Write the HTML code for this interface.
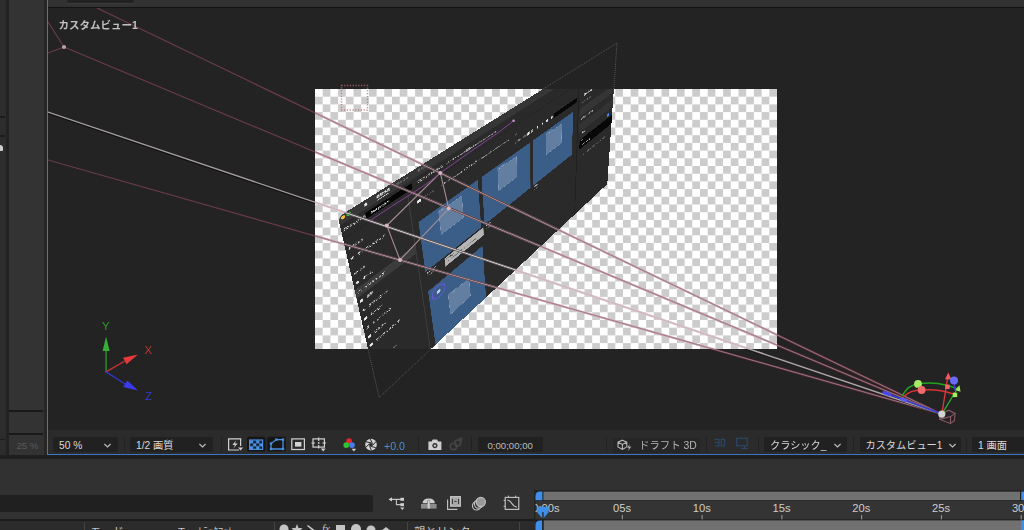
<!DOCTYPE html>
<html lang="ja">
<head>
<meta charset="utf-8">
<title>カスタムビュー1</title>
<style>
*{box-sizing:border-box;margin:0;padding:0}
html,body{width:1024px;height:530px;overflow:hidden;background:#232323}
body{position:relative;font-family:"Liberation Sans","Noto Sans CJK JP",sans-serif;color:#d0d0d0;font-size:11px}
.abs{position:absolute}
#topbar{left:48px;top:0;width:976px;height:7px;background:#323232}
#topline{left:48px;top:7px;width:976px;height:1px;background:#131313}
#tab{left:67px;top:0;width:67px;height:2.5px;background:#222;border-radius:0 0 2px 2px;box-shadow:0 1px 0 #3a3a3a}
#leftcol{left:0;top:0;width:47px;height:456px;background:#333}
#leftcol .a{left:0;top:0;width:6px;height:456px;background:#2d2d2d}
#leftcol .b{left:5.5px;top:0;width:3px;height:456px;background:#222}
#leftcol .c{display:none}
#leftcol .d{left:43.5px;top:0;width:3.5px;height:456px;background:#272625}
#leftcol .e{display:none}
#blueL{left:46.8px;top:0;width:1.3px;height:455px;background:#3f78c8}
#blueB{left:47px;top:453.8px;width:977px;height:1.5px;background:#3d77c4}
#viewlabel{left:58.5px;top:17px;font-size:10.5px;font-weight:bold;color:#c2c2c2;letter-spacing:0;white-space:nowrap}
#toolbar{left:48px;top:430px;width:976px;height:24px;background:#2b2b2b}
.dd{position:absolute;top:437px;height:15.4px;background:#212121;border-radius:2px;color:#dadada;font-size:10.2px;line-height:17.4px;white-space:nowrap;padding-left:6px}
.dd svg{position:absolute;top:6px}
#lower{left:0;top:455px;width:1024px;height:75px;background:#313131}
#lowerline{left:0;top:455px;width:1024px;height:3.6px;background:#1f1f1f}
#search{left:0;top:494.5px;width:373px;height:17px;background:#202020;border-radius:0 2px 2px 0}
#hdrline{left:0;top:519px;width:536px;height:2px;background:#1b1b1b}
#hdr{left:0;top:520px;width:536px;height:10px;background:#2b2b2b;overflow:hidden}
#hdr span{position:absolute;top:1px;font-size:10.5px;color:#b8b8b8;white-space:nowrap;line-height:12px}
#hdr i{position:absolute;top:0;width:1px;height:10px;background:#1a1a1a}
#tl{left:536px;top:490px;width:488px;height:40px;background:#2b2b2b}
.tlabel{position:absolute;top:501px;font-size:11px;color:#c8c8c8;line-height:13px}
.tick{position:absolute;top:515px;width:1px;height:4px;background:#9a9a9a}
</style>
</head>
<body>
<!-- viewer frame -->
<div id="topbar" class="abs"></div><div id="topline" class="abs"></div><div id="tab" class="abs"></div>
<div id="leftcol" class="abs"><div class="abs a"></div><div class="abs b"></div><div class="abs c"></div><div class="abs e"></div><div class="abs d"></div>
 <div class="abs" style="left:0;top:116px;width:5px;height:2px;background:#1c1c1c"></div>
 <div class="abs" style="left:0;top:134.5px;width:5px;height:2px;background:#1c1c1c"></div>
 <div class="abs" style="left:0;top:144.5px;width:3px;height:6px;background:#cfcfcf;border-radius:0 3px 1px 0"></div>
 <div class="abs" style="left:8.5px;top:410.3px;width:34px;height:1.5px;background:#191919"></div>
 <div class="abs" style="left:8.5px;top:433px;width:34px;height:1.5px;background:#191919"></div>
 <div class="abs" style="left:0;top:438.5px;width:5px;height:1.5px;background:#1c1c1c"></div>
 <div class="abs" style="left:16.5px;top:439.5px;font-size:9.6px;color:#5a5a5a;white-space:nowrap">25 %</div>
</div>
<div id="blueL" class="abs"></div>
<!-- VIEWPORT -->
<!--VP-START-->
<svg class="abs" style="left:0;top:0" width="1024" height="530" viewBox="0 0 1024 530">
 <defs>
  <pattern id="chk" x="315" y="89" width="15.4" height="15.4" patternUnits="userSpaceOnUse">
   <rect width="15.4" height="15.4" fill="#ffffff"/>
   <rect x="7.7" y="0" width="7.7" height="7.7" fill="#cccccc"/>
   <rect x="0" y="7.7" width="7.7" height="7.7" fill="#cccccc"/>
  </pattern>
 </defs>
 <polygon points="338,217 617,43 607.3,184 379.1,397.5" fill="none" stroke="#565656" stroke-width="1" stroke-dasharray="1 1"/>
 <rect x="315" y="89" width="462" height="260" fill="url(#chk)"/>
 <rect x="341.5" y="85.5" width="26" height="24.5" fill="none" stroke="#b96a70" stroke-width="1.4" stroke-dasharray="1.2 1.6" opacity=".8"/>
</svg>
<div id="compclip" class="abs" style="left:315px;top:89px;width:462px;height:260px;overflow:hidden">
 <div id="panel" style="position:absolute;left:-315px;top:-89px;width:1000px;height:625px;transform-origin:0 0;transform:matrix3d(0.68601987,-0.14563395,0,0.00065967564,0.21779566,0.44821486,0,0.00040104367,0,0,1,0,338,217,0,1);background:#2a2a2a;border-radius:14px 0 0 0;overflow:hidden">
<!--PANEL-START-->
<style>
#panel{color:#ececec;font-size:8.6px;line-height:10px;font-weight:bold}
#panel .p{position:absolute;white-space:nowrap}
#panel .tile{position:absolute;background:#3b5e89;width:189px;height:174px}
#panel .fold{position:absolute;left:58px;top:14px;width:75px;height:78px;background:rgba(255,255,255,.2);border:1px solid rgba(255,255,255,.28);border-radius:3px}
#panel .fold:before{content:"";position:absolute;left:-1px;top:-7px;width:30px;height:7px;background:rgba(255,255,255,.2);border-radius:3px 3px 0 0}
#panel .ic{position:absolute;width:9px;height:8px;background:#e4e4e4;border-radius:1.5px}
#panel .g{color:#8e8e8e}
#panel .w{color:#f2f2f2;font-weight:bold}
</style>
<div class="p" style="left:0;top:0;width:1000px;height:24px;background:#363636"></div>
<div class="p" style="left:-8px;top:4px;width:9px;height:9px;border-radius:50%;background:#ee5f57"></div>
<div class="p" style="left:4.5px;top:4px;width:9px;height:9px;border-radius:50%;background:#f5bd2f"></div>
<div class="p" style="left:16.5px;top:3.5px;width:10px;height:10px;border-radius:50%;background:#2fc640"></div>
<div class="ic" style="left:56px;top:7px;width:9px;height:9px;clip-path:polygon(50% 0,100% 45%,85% 45%,85% 100%,15% 100%,15% 45%,0 45%)"></div>
<div class="p w" style="left:86px;top:6px;font-size:8.5px">新規作成</div>
<div class="p" style="left:86px;top:19px;width:30px;height:1.5px;background:#d0d0d0"></div>
<div class="p g" style="left:136px;top:6px;font-size:8px;color:#777">読み込み</div>
<div class="p g" style="left:192px;top:6px;font-size:8px;color:#777">書き出し</div>
<div class="p" style="left:3px;top:37px;font-size:7.5px;color:#e2e2e2">プロジェクト名</div>
<div class="p" style="left:56px;top:33px;width:118px;height:17px;background:#050505;border-radius:2px"></div>
<div class="p" style="left:66px;top:36.5px;font-size:8.5px;color:#fff;font-style:italic;font-weight:bold">Test project</div>
<div class="p" style="left:188px;top:37px;font-size:7.5px;color:#dadada">プロジェクトの保存先</div>
<div class="p" style="left:273px;top:37px;font-size:7.5px;color:#c4c4c4">/ユーザー/shared/書類/Adobe/Premiere Pro/22.0</div>
<div class="p" style="left:0;top:62px;width:1000px;height:1px;background:#1c1c1c"></div>
<!-- sidebar -->
<div class="p" style="left:158px;top:63px;width:2.5px;height:562px;background:#3b3b3b"></div>
<div class="p w" style="left:6px;top:93px;font-size:7px">お気に入り</div>
<div class="p" style="left:5px;top:122px;font-size:10px;color:#eee;line-height:12px">★</div>
<div class="p" style="left:22px;top:124px">サンプルメディア</div>
<div class="p w" style="left:6px;top:170px;font-size:7px">ローカル</div>
<div class="ic" style="left:5px;top:200px;clip-path:polygon(50% 0,100% 45%,85% 45%,85% 100%,15% 100%,15% 45%,0 45%)"></div>
<div class="p" style="left:22px;top:200px">ホーム</div>
<div class="p" style="left:0;top:221px;width:158px;height:28px;background:#3c3c3c"></div>
<div class="ic" style="left:5px;top:231px;background:none;border:1.5px solid #e4e4e4"></div>
<div class="p" style="left:22px;top:230px;color:#fff">デスクトップ</div>
<div class="ic" style="left:6px;top:261px;width:7px;height:9px"></div>
<div class="p" style="left:22px;top:261px">書類</div>
<div class="ic" style="left:5px;top:293px;clip-path:polygon(35% 0,65% 0,65% 45%,90% 45%,50% 80%,10% 45%,35% 45%,35% 0,0 88%,100% 88%,100% 100%,0 100%,0 88%)"></div>
<div class="p" style="left:22px;top:292px">ダウンロード</div>
<div class="ic" style="left:5px;top:323px"></div>
<div class="p" style="left:22px;top:323px">ムービー</div>
<div class="ic" style="left:6px;top:355px;width:7px;height:9px;clip-path:polygon(30% 0,100% 0,100% 80%,70% 100%,55% 80%,85% 70%,85% 20%,45% 20%,45% 85%,15% 100%,0 85%,30% 72%)"></div>
<div class="p" style="left:22px;top:355px">ミュージック</div>
<div class="ic" style="left:5px;top:388px"></div>
<div class="p" style="left:22px;top:387px">ピクチャ</div>
<div class="ic" style="left:5px;top:419px;border-radius:1px 3px 1px 1px"></div>
<div class="p" style="left:22px;top:418px">サンプルメディア</div>
<div class="p g" style="left:58px;top:492px;font-size:7px">Test</div>
<!-- breadcrumbs -->
<div class="p" style="left:181px;top:93px;width:10px;height:9px;background:#e8e8e8;border-radius:1.5px"></div>
<div class="p g" style="left:200px;top:92px;font-size:7.5px">ローカル</div>
<div class="p" style="left:252px;top:92px;font-size:7.5px;color:#c8c8c8">/ ユーザー / shared / デスクトップ</div>
<div class="p" style="left:376px;top:92px;font-size:7.5px;color:#b8b8b8">/ Premiere Pro / Sample Media</div>
<div class="p" style="left:508px;top:90px;font-size:9px;color:#aaa">☆</div>
<div class="p g" style="left:506px;top:117px;font-size:7px">並べ替え：名前</div>
<div class="ic" style="left:558px;top:116px;width:9px;height:11px"></div>
<div class="ic" style="left:572px;top:116px;width:9px;height:11px;background:#9a9a9a"></div>
<div class="ic" style="left:598px;top:117px;width:5px;height:9px"></div>
<div class="ic" style="left:620px;top:117px;width:6px;height:9px;clip-path:polygon(0 0,100% 0,60% 50%,60% 100%,40% 100%,40% 50%)"></div>
<div class="ic" style="left:640px;top:117px;width:7px;height:9px"></div>
<div class="ic" style="left:662px;top:117px;width:7px;height:9px;border-radius:50%"></div>
<div class="p" style="left:676px;top:113px;width:111px;height:17px;background:#070707;border-radius:2px"></div>
<!-- tiles -->
<div class="tile" style="left:177px;top:158px"><div class="fold"></div></div>
<div class="tile" style="left:379px;top:158px"><div class="fold"></div></div>
<div class="tile" style="left:581px;top:158px"><div class="fold"></div></div>
<div class="tile" style="left:177px;top:405px;height:230px"><div class="fold" style="top:78px"></div>
 <div class="p" style="left:8px;top:9px;width:45px;height:45px;border:3px solid #6557d8;border-radius:50%"></div>
 <div class="p" style="left:24px;top:25px;width:13px;height:13px;background:#c4cde0;border-radius:50%"></div>
</div>
<div class="p w" style="left:181px;top:336px;font-size:7px">Footage</div>
<div class="p g" style="left:181px;top:347px;font-size:6.5px">12 項目</div>
<div class="p w" style="left:383px;top:336px;font-size:7px">Music</div>
<div class="p g" style="left:383px;top:347px;font-size:6.5px">3 項目</div>
<div class="p w" style="left:585px;top:336px;font-size:7px">Stills</div>
<div class="p g" style="left:585px;top:347px;font-size:6.5px">8 項目</div>
<div class="p" style="left:237px;top:338px;width:137px;height:31px;background:#b4b4b4;border:1px solid #8a8a8a"></div>
<div class="p" style="left:243px;top:341px;font-size:6.5px;color:#222;font-weight:bold">Footage</div>
<div class="p" style="left:243px;top:352px;font-size:6px;color:#444;letter-spacing:-.2px">/ユーザー/shared/デスクトップ/Footage</div>
<!-- right panel -->
<div class="p" style="left:794px;top:63px;width:5px;height:562px;background:#202020"></div>
<div class="p w" style="left:826px;top:116px;font-size:9px">読み込み設定</div>
<div class="p g" style="left:815px;top:143px;font-size:7px">メディアをコピー</div>
<div class="p" style="left:804px;top:166px;width:196px;height:32px;background:#353535"></div>
<div class="p" style="left:813px;top:207px;font-size:7.5px;color:#bdbdbd">新規ビンを作成する</div>
<div class="p" style="left:804px;top:228px;width:196px;height:34px;background:#333"></div>
<div class="p" style="left:966px;top:277px;width:16px;height:11px;border-radius:6px;background:#3f86e8"></div>

<div class="p" style="left:810px;top:296px;width:190px;height:40px;background:#080808"></div>
<div class="p w" style="left:822px;top:268px;font-size:7.5px">名前</div>
<div class="p g" style="left:818px;top:298px;font-size:6px">名前</div>
<div class="p" style="left:822px;top:321px;font-size:7.5px;color:#fff;font-weight:bold">シーケンス 01</div>
<div class="p g" style="left:818px;top:368px;font-size:7px;color:#888">シーケンス設定は最初のクリップに合わせます</div>
<!--PANEL-END-->
 </div>
</div>
<svg id="overlay" class="abs" style="left:0;top:0" width="1024" height="530" viewBox="0 0 1024 530">
 <defs>
  <clipPath id="vp"><rect x="48" y="8" width="976" height="424"/></clipPath>
  <clipPath id="cmp"><rect x="315" y="89" width="462" height="260"/></clipPath>
  <clipPath id="outc"><path clip-rule="evenodd" d="M0,0 H1024 V530 H0 Z M315,89 V349 H777 V89 Z"/></clipPath>
  <clipPath id="rgt"><rect x="777" y="300" width="247" height="132"/></clipPath>
  <clipPath id="mid"><rect x="777" y="8" width="247" height="292"/><rect x="48" y="349" width="729" height="83"/></clipPath>
  <clipPath id="pnl"><polygon points="338,217 617,43 607.3,184 379.1,397.5"/></clipPath>
  <g id="rays">
   <line x1="97" y1="8" x2="941.8" y2="414.1"/>
   <line x1="64" y1="47" x2="941.8" y2="414.1"/>
   <line x1="48" y1="160" x2="941.8" y2="414.1"/>
  </g>
  <g id="ray1"><line x1="48" y1="112" x2="941.8" y2="414.1"/></g>
  <g id="wire">
   <polygon points="440.3,172.9 448.8,208.6 400,260 386.8,225.5"/>
  </g>
 </defs>
 <g clip-path="url(#vp)" fill="none" stroke-linecap="round">
  <!-- on dark background -->
  <use href="#rays" stroke="#6a3c49" stroke-width="1.2"/>
  <line x1="64" y1="47" x2="48" y2="22" stroke="#6a3c49" stroke-width="1.1"/>
  <line x1="64" y1="47" x2="48" y2="53" stroke="#6a3c49" stroke-width="1.1"/>
  <line x1="48" y1="113.3" x2="941.8" y2="415.2" stroke="#101010" stroke-width="1.2" clip-path="url(#outc)"/>
  <use href="#ray1" stroke="#a69da0" stroke-width="1.3"/>
  <circle cx="64" cy="47" r="2.1" fill="#b9a0a8" stroke="none"/>
  <g clip-path="url(#rgt)"><use href="#rays" stroke="#5b2a38" stroke-width="2.3"/><use href="#rays" stroke="#94787f" stroke-width="1"/><use href="#ray1" stroke="#3a3436" stroke-width="2.4"/><use href="#ray1" stroke="#b3acae" stroke-width="1.2"/></g>
  <g clip-path="url(#mid)"><use href="#rays" stroke="#5b2a38" stroke-width="2.1"/><use href="#rays" stroke="#94787f" stroke-width="1"/><use href="#ray1" stroke="#3a3436" stroke-width="2.2"/><use href="#ray1" stroke="#b3acae" stroke-width="1.2"/></g>
  <!-- on checkerboard -->
  <g clip-path="url(#cmp)">
   <use href="#rays" stroke="#d9b3bf" stroke-width="2.2"/>
   <use href="#rays" stroke="#a27c8b" stroke-width="1.15"/>
   <use href="#ray1" stroke="#e2c9d0" stroke-width="2.2"/>
   <use href="#ray1" stroke="#c9b4bb" stroke-width="1"/>
   <!-- on layer -->
   <g clip-path="url(#pnl)">
    <use href="#rays" stroke="#2a2a2a" stroke-width="2.3"/>
    <use href="#ray1" stroke="#2a2a2a" stroke-width="2.3"/>
    <use href="#rays" stroke="#b48a97" stroke-width="1.15"/>
    <use href="#ray1" stroke="#d4c8cc" stroke-width="1.2"/>
    <use href="#wire" stroke="#a58e95" stroke-width="1.1"/>
    <path d="M371,220 Q392,206 412,193.4 T440.3,172.9 Q470,151.6 497.7,133 L513.6,120.8" stroke="#8f46a0" stroke-width="1" opacity=".9"/>
    <circle cx="513.6" cy="120.8" r="1.2" fill="#c9a0d4" stroke="none"/>
    <g fill="#d8b4be" stroke="none">
     <circle cx="440.3" cy="172.9" r="2"/><circle cx="448.8" cy="208.6" r="2"/><circle cx="400" cy="260" r="2"/><circle cx="386.8" cy="225.5" r="2"/>
    </g>
   </g>
  </g>
  <!-- world axes -->
  <g stroke-width="1.3">
   <line x1="106.1" y1="371.9" x2="106.1" y2="349" stroke="#2f9a2f"/>
   <polygon points="106.1,336.4 109.6,351 102.6,351" fill="#35b035" stroke="none"/>
   <line x1="106.1" y1="371.9" x2="124" y2="361.5" stroke="#d03232"/>
   <polygon points="138,354.6 126.5,364.3 123,357.8" fill="#e43a3a" stroke="none"/>
   <line x1="106.1" y1="371.9" x2="125" y2="384" stroke="#3434c8"/>
   <polygon points="138,390.4 123.3,386.9 127.3,380.6" fill="#3a3af0" stroke="none"/>
  </g>
  <!-- camera gizmo -->
  <g stroke-width="1.1">
   <polygon points="939.6,415 948.6,410.2 955,413.4 954.4,420.6 950.4,423.4 939.8,419.4" stroke="#8a5a66"/>
   <path d="M939.8,419.4 L950.6,416.6 L955,413.4 M950.6,416.6 L950.4,423.4" stroke="#8a5a66"/>
   <line x1="941.8" y1="414.1" x2="884" y2="392.6" stroke="#3b3bd8" stroke-width="1.6"/>
   <ellipse cx="887" cy="393.6" rx="5" ry="1.8" transform="rotate(20 887 393.6)" fill="#4848f0" stroke="none"/>
   <ellipse cx="903.5" cy="399.7" rx="3.6" ry="1.8" transform="rotate(20 903.5 399.7)" fill="#5a5af5" stroke="none"/>
   <path d="M902.3,395.5 Q908,385 918,384 Q932,381.5 945.8,385 L955.5,388" stroke="#21a321" stroke-width="1.5"/>
   <path d="M904,396.5 Q910,390 921.4,390 Q938,388.5 952.4,393.7" stroke="#d93434" stroke-width="1.5"/>
   <line x1="941.8" y1="414.1" x2="947.6" y2="378" stroke="#e03a3a" stroke-width="1.3"/>
   <polygon points="948.4,372.5 951.3,379.5 945,379.2" fill="#ef5a5a" stroke="none"/>
   <rect x="945.2" y="384.6" width="4.4" height="4.4" fill="#f06a6a" stroke="none"/>
   <line x1="941.8" y1="414.1" x2="956" y2="391" stroke="#2fae2f" stroke-width="1.3"/>
   <polygon points="959.5,385.3 960.5,391.8 954.8,390" fill="#9be85a" stroke="none"/>
   <rect x="952.8" y="392.7" width="4.4" height="4.4" fill="#a6ec5e" stroke="none"/>
   <line x1="954" y1="381" x2="955" y2="390" stroke="#3b3bd8" stroke-width="1.4"/>
   <circle cx="918" cy="383.9" r="3.9" fill="#a4ee66" stroke="none"/>
   <circle cx="921.6" cy="390" r="3.9" fill="#f06a6a" stroke="none"/>
   <circle cx="954" cy="380.5" r="4" fill="#6a6af8" stroke="none"/>
   <circle cx="941.8" cy="414.1" r="3.6" fill="#d4d4d4" stroke="none"/>
  </g>
 </g>
 <g font-family="Liberation Sans, sans-serif" font-size="11.5" clip-path="url(#vp)">
  <text x="102" y="329.5" fill="#2f9a2f">Y</text>
  <text x="144.5" y="354" fill="#c23434">X</text>
  <text x="145" y="400" fill="#3a3acb">Z</text>
 </g>
</svg>
<!--VP-END-->
<div id="viewlabel" class="abs">カスタムビュー1</div>
<!-- toolbar -->
<div id="toolbar" class="abs"></div>
<!--TB-START-->
<div class="dd" style="left:53px;width:65px">50 %<svg style="left:50px" width="9" height="6" viewBox="0 0 9 6"><path d="M1.4,1 L4.5,4 L7.6,1" fill="none" stroke="#bdbdbd" stroke-width="1.15"/></svg></div>
<div class="dd" style="left:130px;width:83px">1/2 画質<svg style="left:68px" width="9" height="6" viewBox="0 0 9 6"><path d="M1.4,1 L4.5,4 L7.6,1" fill="none" stroke="#bdbdbd" stroke-width="1.15"/></svg></div>
<div class="dd" style="left:478px;width:65px;padding-left:9.5px;color:#bcbcbc;font-size:9.6px">0;00;00;00</div>
<div class="dd" style="left:613px;width:87px;padding-left:26px;color:#b4b4b4;background:#262626;top:437.6px;height:15.6px;line-height:16.6px;font-size:10.4px">ドラフト 3D</div>
<div class="dd" style="left:764px;width:83px">クラシック_<svg style="left:69px" width="9" height="6" viewBox="0 0 9 6"><path d="M1.4,1 L4.5,4 L7.6,1" fill="none" stroke="#bdbdbd" stroke-width="1.15"/></svg></div>
<div class="dd" style="left:859.5px;width:101px">カスタムビュー1<svg style="left:88px" width="9" height="6" viewBox="0 0 9 6"><path d="M1.4,1 L4.5,4 L7.6,1" fill="none" stroke="#bdbdbd" stroke-width="1.15"/></svg></div>
<div class="dd" style="left:972px;width:52px;padding-left:6px;border-radius:2px 0 0 2px">1 画面</div>
<svg class="abs" style="left:0;top:430px" width="1024" height="100" viewBox="0 430 1024 100">
 <g fill="none" stroke="#d2d2d2" stroke-width="1.2">
  <!-- separators -->
  <g stroke="#222" stroke-width="1">
   <line x1="124.5" y1="437" x2="124.5" y2="452"/><line x1="221.5" y1="437" x2="221.5" y2="452"/><line x1="418.5" y1="437" x2="418.5" y2="452"/><line x1="471.5" y1="437" x2="471.5" y2="452"/><line x1="606.5" y1="437" x2="606.5" y2="452"/><line x1="706.5" y1="437" x2="706.5" y2="452"/><line x1="758.5" y1="437" x2="758.5" y2="452"/><line x1="853.5" y1="437" x2="853.5" y2="452"/><line x1="966.5" y1="437" x2="966.5" y2="452"/>
  </g>
  <!-- fast preview -->
  <path d="M239,450 H228.6 V438.8 H240.6 V446"/>
  <path d="M236,440.5 L232.4,445 H235 L233.4,448.6 L237.6,443.6 H235 Z" fill="#d2d2d2" stroke="none"/>
  <path d="M238.2,447.6 H243 L240.6,450.6 Z" fill="#d2d2d2" stroke="none"/>
  <!-- transparency grid (on) -->
  <rect x="247" y="436.7" width="18.4" height="14.8" rx="1.5" fill="#161616" stroke="none"/>
  <rect x="249.6" y="440" width="13" height="9.4" stroke="#4a8fe0" fill="#17273d"/>
  <g fill="#4a8fe0" stroke="none"><rect x="250" y="440.4" width="3.1" height="3"/><rect x="256.2" y="440.4" width="3.1" height="3"/><rect x="253.1" y="443.4" width="3.1" height="3"/><rect x="259.3" y="443.4" width="3.1" height="3"/><rect x="250" y="446.2" width="3.1" height="3"/><rect x="256.2" y="446.2" width="3.1" height="3"/></g>
  <!-- mask path (on) -->
  <rect x="267.4" y="436.7" width="18.4" height="14.8" rx="1.5" fill="#161616" stroke="none"/>
  <path d="M271,449 L271,443.6 L276.4,439.6 L283,439.6 L283,449 Z" stroke="#4a8fe0" stroke-width="1.3"/>
  <g fill="#4a8fe0" stroke="none"><rect x="269.8" y="447.8" width="2.4" height="2.4"/><rect x="281.8" y="447.8" width="2.4" height="2.4"/><rect x="281.8" y="438.4" width="2.4" height="2.4"/><rect x="275.2" y="438.4" width="2.4" height="2.4"/><rect x="269.8" y="442.4" width="2.4" height="2.4"/></g>
  <!-- region of interest -->
  <rect x="291.8" y="438.9" width="12.6" height="10.6"/>
  <rect x="295" y="442" width="6.4" height="4.6" fill="#d2d2d2" stroke="none"/>
  <!-- grid & guides -->
  <rect x="313" y="438.9" width="11.4" height="8.2"/>
  <path d="M311.4,443 H315 M322.4,443 H326 M318.7,437.4 V441 M318.7,445 V448.6" />
  <rect x="317.9" y="442.2" width="1.6" height="1.6" fill="#d2d2d2" stroke="none"/>
  <path d="M320.8,448.6 H325.6 L323.2,451.4 Z" fill="#d2d2d2" stroke="none"/>
  <!-- channels -->
  <g stroke="none"><circle cx="349.1" cy="441.1" r="2.9" fill="#e8242c"/><circle cx="346.3" cy="445.1" r="2.9" fill="#2ec234"/><circle cx="352" cy="445.1" r="2.9" fill="#4a7be8"/>
  <path d="M351.6,448.8 H356.2 L353.9,451.6 Z" fill="#d2d2d2"/></g>
  <!-- exposure aperture -->
  <circle cx="371" cy="444.6" r="5.8" fill="#d2d2d2" stroke="none"/><circle cx="371" cy="444.6" r="1.7" fill="#2a2a2a" stroke="none"/>
  <g stroke="#2a2a2a" stroke-width="1"><path d="M370,438.8 L372.6,443.6 M376.2,441.4 L372.4,445.6 M375.8,447.6 L370.6,446.4 M371.4,450.4 L369.4,445.4 M365.6,447.6 L369.8,443.4 M366,441.8 L371.4,442.9"/></g>
  <!-- camera -->
  <path d="M428.4,441.6 H431.6 L432.8,439.6 H437 L438.2,441.6 H441.4 V450 H428.4 Z" fill="#cfcfcf" stroke="none"/>
  <circle cx="434.9" cy="445.6" r="2.3" fill="#2a2a2a" stroke="#2a2a2a" stroke-width=".6"/>
  <circle cx="434.9" cy="445.6" r="1.2" fill="#cfcfcf" stroke="none"/>
  <!-- show snapshot (disabled) -->
  <g stroke="#444" stroke-width="1.6"><circle cx="453.5" cy="446.4" r="3.2"/><circle cx="457.6" cy="443" r="3"/><path d="M458,439.2 L461.6,438.4 L461,441.6"/></g>
  <!-- draft 3d cube -->
  <g stroke="#b8b8b8" stroke-width="1.1"><path d="M622.4,440.2 L626.8,442.2 V447 L622.4,449.4 L618,447 V442.2 Z M618,442.2 L622.4,444.4 L626.8,442.2 M622.4,444.4 V449.4"/></g>
  <path d="M630.2,443.6 L626.6,447.8 H628.8 L627.6,451.4 L631.6,446.6 H629.2 Z" fill="#cfcfcf" stroke="#262626" stroke-width=".5"/>
  <!-- disabled 3D icons -->
  <g stroke="#2c4668" stroke-width="1.2" transform="translate(0,-1.6)"><path d="M714.8,441 H719 V447.4 H714.8 M714.8,444.2 H719 M721.2,441 H724.6 V447.4 H721.2 Z"/><rect x="736.6" y="439.8" width="10.6" height="7.6"/><path d="M744.6,447.4 V450.2 M741.6,450.2 H747.6"/></g>
 </g>
</svg>
<!--TB-END-->
<div class="abs" style="left:384px;top:438px;font-size:10.6px;line-height:16px;color:#4a8fdc">+0.0</div>
<div id="blueB" class="abs"></div>
<div id="lower" class="abs"></div><div id="lowerline" class="abs"></div>
<div id="search" class="abs"></div>
<div id="hdrline" class="abs"></div>
<!--TL-START-->
<svg class="abs" style="left:0;top:486px" width="1024" height="44" viewBox="0 486 1024 44">
 <defs><clipPath id="tlc"><rect x="535.5" y="490" width="490" height="40"/></clipPath></defs>
 <rect x="534" y="489" width="1.5" height="41" fill="#242424"/>
 <rect x="535.5" y="490.5" width="488.5" height="40" fill="#1c1c1c"/>
 <rect x="535.5" y="501" width="488.5" height="18.4" fill="#343434"/>
 <rect x="543.4" y="491.6" width="476.6" height="8.6" fill="#717171"/>
 <rect x="543.4" y="520.4" width="481" height="9.6" fill="#717171"/>
 <path d="M542.4,491.6 V500.2 H535.5 V496 Q535.5,491.6 540,491.6 Z" fill="#3f8fe8"/>
 <rect x="1020" y="491.6" width="1.2" height="8.6" fill="#1d1d1d"/><rect x="1021.2" y="491.6" width="3" height="8.6" fill="#3f8fe8"/><rect x="1021.2" y="520.4" width="3" height="9.6" fill="#3f8fe8"/>
 <path d="M542.4,520.4 V530 H535.5 V525 Q535.5,520.4 540,520.4 Z" fill="#3f8fe8"/>
 <g stroke="#9c9c9c" stroke-width="1"><line x1="622.3" y1="515" x2="622.3" y2="519.4"/><line x1="702.1" y1="515" x2="702.1" y2="519.4"/><line x1="781.9" y1="515" x2="781.9" y2="519.4"/><line x1="861.6" y1="515" x2="861.6" y2="519.4"/><line x1="941.4" y1="515" x2="941.4" y2="519.4"/><line x1="1021.2" y1="515" x2="1021.2" y2="519.4"/></g>
 <g font-family="Liberation Sans, sans-serif" font-size="11.2" fill="#cdcdcd">
  <text x="532.2" y="512.2" clip-path="url(#tlc)">0:00s</text><text x="613" y="512.2">05s</text><text x="692.8" y="512.2">10s</text><text x="772.6" y="512.2">15s</text><text x="852.3" y="512.2">20s</text><text x="932.1" y="512.2">25s</text><text x="1011.9" y="512.2">30s</text>
 </g>
 <path d="M537.3,506.7 H548.4 V512.4 L542.9,519 L537.3,512.4 Z" fill="#3f8fe8"/>
 <line x1="542.9" y1="512" x2="542.9" y2="530" stroke="#1d1d1d" stroke-width="1.2"/>
 <!-- comp buttons -->
 <g fill="none" stroke="#c2c2c2" stroke-width="1.15">
  <path d="M389,499.4 H395.6 M395.6,499.4 H401 M396.4,499.4 V504.6 H401" /><path d="M392,497.2 L388.6,499.4 L392,501.6 Z" fill="#cfcfcf" stroke="none"/><rect x="400.4" y="497.8" width="3.6" height="3" fill="#cfcfcf" stroke="none"/><rect x="400.4" y="503.2" width="3.6" height="3" fill="#cfcfcf" stroke="none"/><path d="M400.2,507.6 H404.4 L402.3,510 Z" fill="#cfcfcf" stroke="none"/>
  <path d="M422.6,503.2 Q422.6,498.4 428.7,498.4 Q434.8,498.4 434.8,503.2 Z" fill="#cfcfcf" stroke="none"/><rect x="427.4" y="500.4" width="2.6" height="8" fill="#2f2f2f" stroke="none"/><rect x="421" y="504" width="15.6" height="4.6" fill="#8c8c8c" stroke="none"/><rect x="427.6" y="500.4" width="2.2" height="8.2" fill="#cfcfcf" stroke="none"/>
  <rect x="450.6" y="496.6" width="9.8" height="9.6" fill="#a8a8a8"/><path d="M447.6,499.6 V509.4 H457.4" /><path d="M452.4,499 V504 M458.6,499 V504 M454.4,501.4 H456.6" stroke="#2f2f2f" stroke-width="1"/>
  <circle cx="476.6" cy="505.8" r="4.2"/><circle cx="478.6" cy="504" r="4.2" fill="#313131"/><circle cx="480.8" cy="502" r="4.6" fill="#9a9a9a"/>
  <rect x="505.2" y="497.4" width="13.6" height="12"/><path d="M507.2,500 C512,500 511.4,507 517,507"/><path d="M508.4,495.6 V497.4 M515.6,495.6 V497.4 M503.6,500.4 H505.2 M503.6,506.4 H505.2" stroke-width="1"/>
 </g>
</svg>
<div id="hdr2" class="abs" style="left:0;top:521px;width:535px;height:9px;overflow:hidden;background:#2b2b2b">
 <i class="abs" style="left:84px;top:1px;width:1px;height:10px;background:#444"></i>
 <i class="abs" style="left:274px;top:1px;width:1px;height:10px;background:#444"></i>
 <i class="abs" style="left:407px;top:1px;width:1px;height:10px;background:#444"></i>
 <i class="abs" style="left:519px;top:1px;width:1px;height:10px;background:#444"></i>
 <span class="abs" style="left:90px;top:4px;font-size:11.3px;line-height:14px;color:#c4c4c4;white-space:nowrap">モード</span>
 <span class="abs" style="left:178px;top:4px;font-size:11.3px;line-height:14px;color:#c4c4c4;white-space:nowrap">T</span><span class="abs" style="left:198px;top:4px;font-size:10px;line-height:14px;color:#c4c4c4;white-space:nowrap">ﾄﾗｯｸﾏｯﾄ</span>
 <span class="abs" style="left:414px;top:4px;font-size:11.3px;line-height:14px;color:#c4c4c4;white-space:nowrap">親とリンク</span>
 <svg class="abs" style="left:278px;top:1.5px" width="120" height="8" viewBox="0 0 120 8"><g fill="#c4c4c4"><circle cx="6" cy="6" r="4.5"/><path d="M19,1 l1.5,4 h4 l-3,3 h-5 l-3,-3 h4 z"/><path d="M30,2 l8,6 h-3 l-6,-5 z"/><text x="44" y="9" font-family="Liberation Serif, serif" font-style="italic" font-size="11" fill="#c4c4c4">fx</text><rect x="58" y="2" width="9" height="7"/><circle cx="78" cy="6" r="5"/><circle cx="93" cy="7" r="4.5"/><path d="M103,8 l5,-4 l5,4 z"/></g></svg>
</div>
<!--TL-END-->
</body>
</html>
